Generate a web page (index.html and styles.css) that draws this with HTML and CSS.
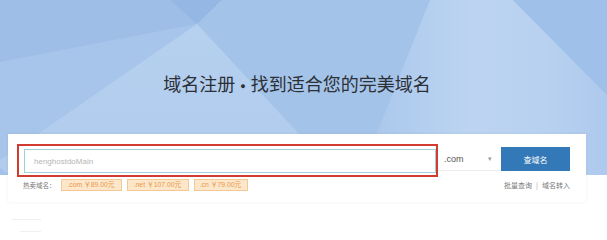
FILE: index.html
```html
<!DOCTYPE html>
<html lang="zh-CN">
<head>
<meta charset="utf-8">
<title>域名注册</title>
<link rel="stylesheet" href="styles.css">
</head>
<body>
<div class="banner">
  <svg class="banner-bg" viewBox="0 0 607 175" preserveAspectRatio="none" aria-hidden="true">
    <defs>
      <linearGradient id="g1" x1="0" y1="0" x2="0" y2="1">
        <stop offset="0" stop-color="#b6d0ef"/>
        <stop offset="1" stop-color="#b0cbed"/>
      </linearGradient>
      <linearGradient id="g2" x1="0" y1="0" x2="1" y2="0">
        <stop offset="0" stop-color="#a8c6eb"/>
        <stop offset="0.45" stop-color="#bcd4f1"/>
        <stop offset="0.75" stop-color="#b8d1f0"/>
        <stop offset="1" stop-color="#adc9ed"/>
      </linearGradient>
    </defs>
    <rect x="0" y="0" width="607" height="175" fill="#a3c2e8"/>
    <polygon points="0,0 170,0 197,24 0,62" fill="#9ebee7"/>
    <polygon points="0,62 197,24 0,160" fill="#a7c5ea"/>
    <polygon points="170,0 222,0 197,24" fill="#94b7e3"/>
    <polygon points="222,0 430,0 360,175 320,175 290,130 197,24" fill="#a4c3e9"/>
    <polygon points="197,24 300,135 320,175 10,175 0,168 0,160" fill="url(#g1)"/>
    <polygon points="430,0 513,0 607,95 607,175 360,175" fill="url(#g2)"/>
    <polygon points="513,0 607,0 607,95" fill="#9fc0e8"/>
  </svg>
  <div class="banner-inner">
    <h1 class="title">域名注册 <span class="dot">●</span> 找到适合您的完美域名</h1>
  </div>
</div>

<div class="card">
  <div class="search-row">
    <div class="search-box">
      <input class="search-input" type="text" placeholder="henghostdoMain">
    </div>
    <div class="suffix-select">
      <span class="suffix-text">.com</span>
      <span class="caret">▾</span>
    </div>
    <button class="search-btn" type="button">查域名</button>
  </div>
  <div class="hot-row">
    <span class="hot-label">热卖域名：</span>
    <span class="tag tag-com">.com ￥89.00元</span>
    <span class="tag tag-net">.net ￥107.00元</span>
    <span class="tag tag-cn">.cn ￥79.00元</span>
    <span class="links"><a class="link" href="#">批量查询</a><span class="sep">|</span><a class="link" href="#">域名转入</a></span>
  </div>
</div>

<div class="below">
  <div class="line line-a"></div>
  <div class="line line-b"></div>
</div>
</body>
</html>
```

FILE: styles.css
```css
* { box-sizing: border-box; }

html, body {
  margin: 0;
  padding: 0;
  background: #ffffff;
}

body {
  font-family: "Liberation Sans", "Noto Sans CJK SC", sans-serif;
  color: #333;
}

.banner {
  position: relative;
  height: 175px;
  overflow: hidden;
}

.banner-bg {
  position: absolute;
  left: 0;
  top: 0;
  width: 100%;
  height: 100%;
}

.banner-inner {
  position: relative;
  width: 578px;
  margin-left: 8px;
  display: flex;
  justify-content: center;
}

.title {
  margin: 0;
  padding-top: 73px;
  font-family: "Liberation Sans", "Noto Sans CJK SC", sans-serif;
  font-size: 18px;
  line-height: 24px;
  font-weight: normal;
  color: #2c3036;
  white-space: nowrap;
}

.dot {
  font-size: 9px;
  vertical-align: 2px;
}

.card {
  position: relative;
  width: 578px;
  height: 68px;
  margin: -41px 0 0 8px;
  padding: 10px 16px 0 9px;
  background: #ffffff;
  box-shadow: 0 0 3px rgba(0, 0, 0, 0.07);
}

.search-row {
  display: flex;
  height: 33px;
}

.search-box {
  width: 421px;
  height: 33px;
  border: 2px solid #d33a30;
  padding: 3px 0 2px 5px;
  display: flex;
}

.search-input {
  flex: 1;
  height: 24px;
  margin: 0;
  border: 1px solid #a3cfd8;
  padding: 0 0 0 9px;
  font-family: "Liberation Sans", sans-serif;
  font-size: 8px;
  color: #333;
  outline: none;
  background: #fff;
}

.search-input::placeholder {
  color: #b5b5b5;
}

.suffix-select {
  width: 62px;
  height: 24px;
  margin-top: 3px;
  border-bottom: 1px solid #ececec;
  display: flex;
  align-items: center;
  padding: 0 8px 0 6px;
  justify-content: space-between;
}

.suffix-text {
  font-size: 9px;
  color: #555;
}

.caret {
  font-size: 7px;
  color: #9a9a9a;
}

.search-btn {
  width: 69px;
  height: 24px;
  margin: 3px 0 0 1px;
  border: 0;
  padding: 0;
  background: #3479b7;
  color: #ffffff;
  font-family: "Noto Sans CJK SC", sans-serif;
  font-size: 8px;
}

.hot-row {
  display: flex;
  align-items: center;
  height: 12px;
  margin-top: 2px;
}

.hot-label {
  margin-left: 6px;
  margin-right: 5px;
  font-family: "Noto Sans CJK SC", sans-serif;
  font-size: 6.5px;
  color: #777;
}

.tag {
  height: 12px;
  line-height: 10px;
  margin-right: 5px;
  border: 1px solid #f5c792;
  background: #fde7cb;
  color: #e89847;
  font-size: 6.8px;
  white-space: nowrap;
  display: flex;
  align-items: center;
  justify-content: center;
  overflow: hidden;
}

.tag-com { width: 61px; }
.tag-net { width: 62px; }
.tag-cn { width: 54px; }

.links {
  margin-left: auto;
  display: flex;
  align-items: center;
  font-family: "Noto Sans CJK SC", sans-serif;
  font-size: 7px;
  color: #777;
}

.link {
  color: #777;
  text-decoration: none;
}

.sep {
  margin: 0 4px;
  color: #999;
}

.below {
  padding-top: 17px;
}

.line {
  height: 1px;
  background: #f0f0f0;
}

.line-a {
  width: 29px;
  margin-left: 12px;
}

.line-b {
  width: 21px;
  margin-left: 20px;
  margin-top: 11px;
}
```
